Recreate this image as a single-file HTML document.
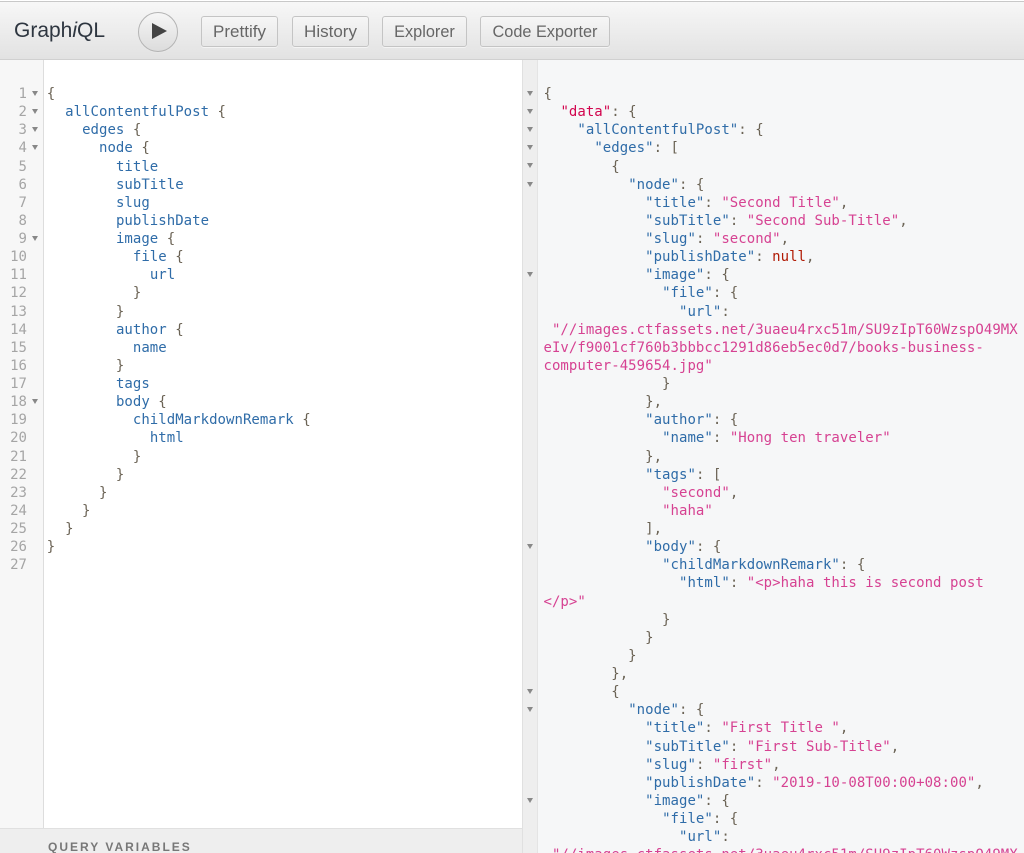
<!DOCTYPE html>
<html><head><meta charset="utf-8">
<style>
html,body{margin:0;padding:0;background:#fff}
#app{position:relative;width:1024px;height:853px;overflow:hidden;background:#fff;font-family:"Liberation Sans",sans-serif}
#top{position:absolute;left:0;top:1px;width:1024px;height:59px;background:linear-gradient(#f7f7f7,#e2e2e2);border-top:1px solid #c8c8c8;border-bottom:1px solid #d0d0d0;box-sizing:border-box}
#logo{position:absolute;left:14px;top:16px;font-size:21px;line-height:26px;color:#2e3640;filter:blur(.3px)}
.btn{position:absolute;top:16px;height:31px;box-sizing:border-box;border:1px solid #c4c4c4;border-radius:3px;background:linear-gradient(#f6f6f6,#e6e6e6);box-shadow:0 1px 0 #f4f4f4;color:#666;font-size:17px;line-height:29px;text-align:center;white-space:nowrap}
.btn span{filter:blur(.3px);display:inline-block}
#run{position:absolute;left:138px;top:12px;width:40px;height:40px;border-radius:50%;box-sizing:border-box;border:1px solid #b4b4b4;background:linear-gradient(#f6f6f6,#dcdcdc);box-shadow:0 1px 1px #e8e8e8}
#lg{position:absolute;left:0;top:60px;width:43px;height:768px;background:#f7f7f7;border-right:1px solid #ddd}
#rbg{position:absolute;left:522px;top:60px;width:502px;height:793px;background:#f6f7f8}
#rg{position:absolute;left:522px;top:60px;width:14px;height:793px;background:#eeeeee;border-right:1px solid #e4e4e4;border-left:1px solid #e0e0e0;box-sizing:content-box}
#qv{position:absolute;left:0;top:828px;width:522px;height:25px;background:#eeeeee;border-top:1px solid #e0e0e0;box-sizing:border-box}
#qvt{position:absolute;left:48px;top:11px;font-size:12px;line-height:14px;font-weight:bold;letter-spacing:2px;color:#777;filter:blur(.3px)}
pre{position:absolute;margin:0;font-family:"DejaVu Sans Mono","Liberation Mono",monospace;font-size:14px;line-height:18.12px;letter-spacing:.04px;color:#6b6355;white-space:pre;filter:blur(.35px)}
#lc{left:48.2px;top:85px}
#rc{left:543.5px;top:85px}
#nums{left:0;top:85px;width:27px;text-align:right;color:#a5a5a5;font-size:14px}
.p{color:#2f6ca8}
.s{color:#d64292}
.n{color:#b11a04}
.d{color:#d2054e}
.b{position:relative;left:-1.5px}
.f{position:absolute;width:0;height:0;border-left:3.5px solid transparent;border-right:3.5px solid transparent;border-top:5px solid #888}
</style></head><body>
<div id="app">
<div id="top">
  <div id="logo">Graph<i>i</i>QL</div>
</div>
<div id="run"><svg width="38" height="38" viewBox="0 0 38 38" style="display:block"><path d="M13 10 L28 18 L13 26 Z" fill="#444"/></svg></div>
<div class="btn" style="left:201px;width:77px"><span>Prettify</span></div>
<div class="btn" style="left:292px;width:77px"><span>History</span></div>
<div class="btn" style="left:382px;width:85px;font-size:16.3px;line-height:30px"><span>Explorer</span></div>
<div class="btn" style="left:480px;width:130px;font-size:16.3px;line-height:30px"><span>Code Exporter</span></div>

<div id="lg"></div>
<div id="rbg"></div>
<div id="rg"></div>
<pre id="nums">1
2
3
4
5
6
7
8
9
10
11
12
13
14
15
16
17
18
19
20
21
22
23
24
25
26
27</pre>
<div class="f" style="left:32px;top:91px"></div>
<div class="f" style="left:32px;top:109px"></div>
<div class="f" style="left:32px;top:127px"></div>
<div class="f" style="left:32px;top:145px"></div>
<div class="f" style="left:32px;top:236px"></div>
<div class="f" style="left:32px;top:399px"></div>

<pre id="lc"><span class="b">{</span>
  <span class="p">allContentfulPost</span> {
    <span class="p">edges</span> {
      <span class="p">node</span> {
        <span class="p">title</span>
        <span class="p">subTitle</span>
        <span class="p">slug</span>
        <span class="p">publishDate</span>
        <span class="p">image</span> {
          <span class="p">file</span> {
            <span class="p">url</span>
          }
        }
        <span class="p">author</span> {
          <span class="p">name</span>
        }
        <span class="p">tags</span>
        <span class="p">body</span> {
          <span class="p">childMarkdownRemark</span> {
            <span class="p">html</span>
          }
        }
      }
    }
  }
<span class="b">}</span>
</pre>

<div class="f" style="left:527px;top:91px"></div>
<div class="f" style="left:527px;top:109px"></div>
<div class="f" style="left:527px;top:127px"></div>
<div class="f" style="left:527px;top:145px"></div>
<div class="f" style="left:527px;top:163px"></div>
<div class="f" style="left:527px;top:182px"></div>
<div class="f" style="left:527px;top:272px"></div>
<div class="f" style="left:527px;top:544px"></div>
<div class="f" style="left:527px;top:689px"></div>
<div class="f" style="left:527px;top:707px"></div>
<div class="f" style="left:527px;top:798px"></div>

<pre id="rc">{
  <span class="d">"data"</span>: {
    <span class="p">"allContentfulPost"</span>: {
      <span class="p">"edges"</span>: [
        {
          <span class="p">"node"</span>: {
            <span class="p">"title"</span>: <span class="s">"Second Title"</span>,
            <span class="p">"subTitle"</span>: <span class="s">"Second Sub-Title"</span>,
            <span class="p">"slug"</span>: <span class="s">"second"</span>,
            <span class="p">"publishDate"</span>: <span class="n">null</span>,
            <span class="p">"image"</span>: {
              <span class="p">"file"</span>: {
                <span class="p">"url"</span>:
 <span class="s">"//images.ctfassets.net/3uaeu4rxc51m/SU9zIpT60WzspO49MX</span>
<span class="s">eIv/f9001cf760b3bbbcc1291d86eb5ec0d7/books-business-</span>
<span class="s">computer-459654.jpg"</span>
              }
            },
            <span class="p">"author"</span>: {
              <span class="p">"name"</span>: <span class="s">"Hong ten traveler"</span>
            },
            <span class="p">"tags"</span>: [
              <span class="s">"second"</span>,
              <span class="s">"haha"</span>
            ],
            <span class="p">"body"</span>: {
              <span class="p">"childMarkdownRemark"</span>: {
                <span class="p">"html"</span>: <span class="s">"&lt;p&gt;haha this is second post</span>
<span class="s">&lt;/p&gt;"</span>
              }
            }
          }
        },
        {
          <span class="p">"node"</span>: {
            <span class="p">"title"</span>: <span class="s">"First Title "</span>,
            <span class="p">"subTitle"</span>: <span class="s">"First Sub-Title"</span>,
            <span class="p">"slug"</span>: <span class="s">"first"</span>,
            <span class="p">"publishDate"</span>: <span class="s">"2019-10-08T00:00+08:00"</span>,
            <span class="p">"image"</span>: {
              <span class="p">"file"</span>: {
                <span class="p">"url"</span>:
 <span class="s">"//images.ctfassets.net/3uaeu4rxc51m/SU9zIpT60WzspO49MX</span></pre>

<div id="qv"><div id="qvt">QUERY VARIABLES</div></div>
</div>
</body></html>
